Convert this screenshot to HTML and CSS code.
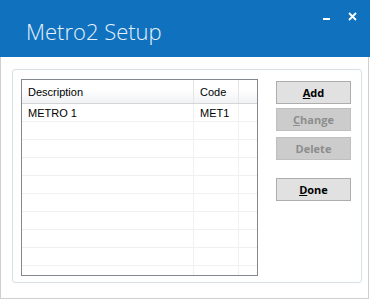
FILE: index.html
```html
<!DOCTYPE html>
<html lang="en">
  <head>
    <meta charset="UTF-8" />
    <title>Metro2 Setup</title>
    <link rel="stylesheet" href="styles.css">
  </head>
  <body>
    <div class="window">
      <div class="titlebar">
        <span class="title">Metro2 Setup</span>
        <span class="min"></span>
        <svg class="close" width="9" height="9" viewBox="0 0 9 9">
          <path d="M1 1L8 8M8 1L1 8" stroke="#fff" stroke-width="1.8" />
        </svg>
      </div>
      <div class="content">
        <div class="group">
          <div class="list">
            <div class="row head">
              <div class="c1">Description</div>
              <div class="c2">Code</div>
              <div class="c3"></div>
            </div>
            <div class="row">
              <div class="c1">METRO 1</div>
              <div class="c2">MET1</div>
              <div class="c3"></div>
            </div>
            <div class="row"><div class="c1"></div><div class="c2"></div><div class="c3"></div></div>
            <div class="row"><div class="c1"></div><div class="c2"></div><div class="c3"></div></div>
            <div class="row"><div class="c1"></div><div class="c2"></div><div class="c3"></div></div>
            <div class="row"><div class="c1"></div><div class="c2"></div><div class="c3"></div></div>
            <div class="row"><div class="c1"></div><div class="c2"></div><div class="c3"></div></div>
            <div class="row"><div class="c1"></div><div class="c2"></div><div class="c3"></div></div>
            <div class="row"><div class="c1"></div><div class="c2"></div><div class="c3"></div></div>
            <div class="row"><div class="c1"></div><div class="c2"></div><div class="c3"></div></div>
            <div class="row last"><div class="c1"></div><div class="c2"></div><div class="c3"></div></div>
          </div>
          <div class="buttons">
            <button class="btn"><u>A</u>dd</button>
            <button class="btn off change" disabled><u>C</u>hange</button>
            <button class="btn off delete" disabled>Delete</button>
            <button class="btn done"><u>D</u>one</button>
          </div>
        </div>
      </div>
    </div>
  </body>
</html>
```

FILE: styles.css
```css
body {
  margin: 0;
  font-family: "Liberation Sans", Arial, sans-serif;
  background: #fff;
}
.window {
  width: 369px;
  height: 300px;
}
.titlebar {
  width: 370px;
  height: 57px;
  background-color: #1072be;
  position: relative;
}
.title {
  position: absolute;
  left: 26px;
  top: 16px;
  font-family: "Open Sans", sans-serif;
  font-weight: 300;
  font-size: 22px;
  color: #e6f1fa;
}
.min {
  position: absolute;
  left: 323px;
  top: 18px;
  width: 7px;
  height: 2px;
  background: #fff;
}
.close {
  position: absolute;
  left: 348px;
  top: 12px;
}
.content {
  border: 1px solid #cfcfcf;
  border-top: none;
  box-sizing: border-box;
  height: 242px;
  padding: 12px 0 0 11px;
}
.group {
  width: 350px;
  height: 214px;
  box-sizing: border-box;
  border: 1px solid #d5dfe5;
  border-radius: 3px;
  display: flex;
  padding: 9px 0 0 8px;
}
.list {
  width: 237px;
  height: 197px;
  box-sizing: border-box;
  border: 1px solid #828790;
  overflow: hidden;
  font-size: 11px;
  color: #000;
}
.row {
  display: flex;
  height: 17px;
  border-bottom: 1px solid #f0f0f0;
}
.row.last {
  border-bottom: none;
}
.row div {
  box-sizing: border-box;
  padding: 3px 0 0 6px;
  border-right: 1px solid #f0f0f0;
}
.c1 {
  width: 172px;
}
.c2 {
  width: 45px;
}
.c3 {
  width: 18px;
}
.row div.c3 {
  border-right: none;
}
.row.head {
  height: 23px;
  background: linear-gradient(#ffffff 40%, #f1f2f4);
  border-bottom: 1px solid #d5d5d5;
}
.row.head div {
  padding-top: 6px;
  border-right: 1px solid #e5e5e5;
}
.row.head div.c3 {
  border-right: none;
}
.buttons {
  display: flex;
  flex-direction: column;
  margin-left: 18px;
  padding-top: 2px;
}
.btn {
  width: 75px;
  height: 23px;
  box-sizing: border-box;
  background: #e1e1e1;
  border: 1px solid #adadad;
  font-family: "Open Sans", sans-serif;
  font-weight: bold;
  font-size: 11px;
  color: #000;
  padding: 0;
}
.btn u {
  text-decoration-thickness: 1px;
}
.btn.off {
  background: #cccccc;
  border-color: #bfbfbf;
  color: #8d8d8d;
}
.change {
  margin-top: 4px;
}
.delete {
  margin-top: 6px;
}
.done {
  margin-top: 18px;
}
```
